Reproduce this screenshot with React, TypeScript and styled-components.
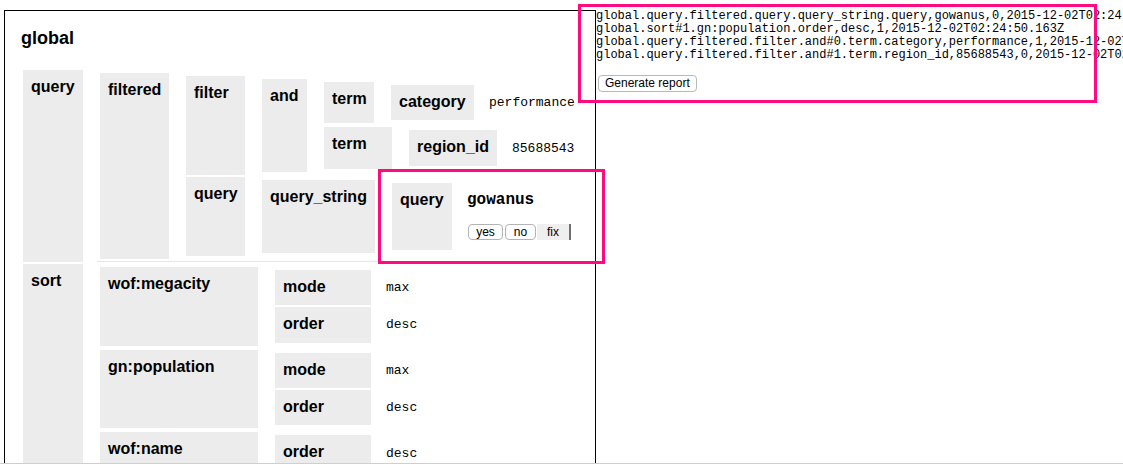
import React from "react";
import styled, { createGlobalStyle } from "styled-components";

const PINK = "#ff0a80";
const KEY_BG = "#ececec";
const MONO = `"Liberation Mono", "Courier New", monospace`;
const SANS = `"Liberation Sans", Arial, sans-serif`;

const GlobalStyle = createGlobalStyle`
  html, body { margin: 0; padding: 0; overflow: hidden; background: #fff; }
  body { font-family: ${SANS}; color: #000; }
`;

const Page = styled.div`
  position: relative;
  height: 464px;
  box-sizing: border-box;
  padding: 10px 0 0 4px;
`;

const Frame = styled.div`
  width: 592px;
  min-height: 700px;
  box-sizing: border-box;
  border: 1px solid #000;
  padding-right: 1px;
`;

const Title = styled.div`
  margin: 17px 0 0 16px;
  font-size: 18px;
  font-weight: bold;
  line-height: 21px;
`;

const Tree = styled.div`
  margin: 18px 0 0 15px;
  padding: 3px 0 3px 3px;
  display: flex;
  flex-direction: column;
  gap: 2px;
`;

const Row = styled.div`
  display: flex;
  align-items: stretch;
  gap: 14px;
`;

const Key = styled.div<{ $w: number }>`
  flex: none;
  width: ${(p) => p.$w}px;
  box-sizing: border-box;
  background: ${KEY_BG};
  padding: 8px 8px 9px;
  font-size: 16px;
  font-weight: bold;
  line-height: 18.4px;
  white-space: nowrap;
`;

const Nest = styled.div<{ $gap?: number; $rule?: boolean; $mark?: boolean }>`
  flex: 1;
  min-width: 0;
  display: flex;
  flex-direction: column;
  gap: ${(p) => p.$gap ?? 2}px;
  padding: 3px 0 3px 3px;
  ${(p) => (p.$rule ? "box-shadow: inset 0 -1px 0 #e6e6e6;" : "")}
  ${(p) => (p.$mark ? `outline: 3px solid ${PINK}; outline-offset: 8px;` : "")}
`;

const Scalar = styled.div`
  flex: 1;
  display: flex;
  align-items: center;
  padding-left: 1px;
  font-family: ${MONO};
  font-size: 13px;
  white-space: nowrap;
`;

const Answer = styled.div`
  flex: 1;
  padding: 8px 0 10px 1px;
`;

const Word = styled.div`
  font-family: ${MONO};
  font-weight: bold;
  font-size: 16px;
  line-height: 19px;
`;

const Choices = styled.div`
  display: flex;
  gap: 2px;
  margin: 14px 0 0 1px;
  height: 16px;
`;

const Choice = styled.button<{ $w: number; $active?: boolean }>`
  width: ${(p) => p.$w}px;
  height: 16px;
  padding: 0;
  box-sizing: border-box;
  font-family: ${SANS};
  font-size: 12px;
  line-height: 14px;
  color: #000;
  background: ${(p) => (p.$active ? "#efefef" : "#fff")};
  border: ${(p) => (p.$active ? "none" : "1px solid #b4b4b4")};
  border-right: ${(p) => (p.$active ? "2px solid #707070" : "1px solid #b4b4b4")};
  border-radius: ${(p) => (p.$active ? "0" : "4px")};
  margin-left: ${(p) => (p.$active ? "-1px" : "0")};
`;

const LogPanel = styled.div`
  position: absolute;
  left: 581px;
  top: 7px;
  width: 513px;
  height: 93px;
  box-sizing: border-box;
  padding: 3px 0 0 15px;
  outline: 3px solid ${PINK};
`;

const LogText = styled.pre`
  margin: 0;
  font-family: ${MONO};
  font-size: 12px;
  line-height: 13px;
  white-space: pre;
  color: #000;
`;

const ReportButton = styled.button`
  display: block;
  margin: 13px 0 0 2px;
  height: 17px;
  padding: 0 6px;
  box-sizing: border-box;
  font-family: ${SANS};
  font-size: 12px;
  line-height: 15px;
  color: #000;
  background: #fff;
  border: 1px solid #b9b9b9;
  border-radius: 4px;
`;

const ScrollEdge = styled.div`
  position: fixed;
  left: 0;
  right: 0;
  bottom: 0;
  height: 1px;
  background: #cfcfcf;
`;

const LOG = [
  "global.query.filtered.query.query_string.query,gowanus,0,2015-12-02T02:24:50.163Z",
  "global.sort#1.gn:population.order,desc,1,2015-12-02T02:24:50.163Z",
  "global.query.filtered.filter.and#0.term.category,performance,1,2015-12-02T02:24:50.163Z",
  "global.query.filtered.filter.and#1.term.region_id,85688543,0,2015-12-02T02:24:50.163Z",
];

type SortItem = { name: string; fields: [string, string][] };
const SORTS: SortItem[] = [
  { name: "wof:megacity", fields: [["mode", "max"], ["order", "desc"]] },
  { name: "gn:population", fields: [["mode", "max"], ["order", "desc"]] },
  { name: "wof:name", fields: [["order", "desc"], ["mode", "max"]] },
];

export default function App() {
  return (
    <>
      <GlobalStyle />
      <Page>
        <Frame>
          <Title>global</Title>
          <Tree>
            <Row>
              <Key $w={60}>query</Key>
              <Nest $rule>
                <Row>
                  <Key $w={69}>filtered</Key>
                  <Nest>
                    <Row>
                      <Key $w={59}>filter</Key>
                      <Nest>
                        <Row>
                          <Key $w={45}>and</Key>
                          <Nest $gap={4}>
                            <Row>
                              <Key $w={50}>term</Key>
                              <Nest>
                                <Row>
                                  <Key $w={83}>category</Key>
                                  <Scalar>performance</Scalar>
                                </Row>
                              </Nest>
                            </Row>
                            <Row>
                              <Key $w={68}>term</Key>
                              <Nest>
                                <Row>
                                  <Key $w={88}>region_id</Key>
                                  <Scalar>85688543</Scalar>
                                </Row>
                              </Nest>
                            </Row>
                          </Nest>
                        </Row>
                      </Nest>
                    </Row>
                    <Row>
                      <Key $w={59}>query</Key>
                      <Nest>
                        <Row>
                          <Key $w={113}>query_string</Key>
                          <Nest $mark>
                            <Row>
                              <Key $w={60}>query</Key>
                              <Answer>
                                <Word>gowanus</Word>
                                <Choices>
                                  <Choice $w={35}>yes</Choice>
                                  <Choice $w={31}>no</Choice>
                                  <Choice $w={34} $active>
                                    fix
                                  </Choice>
                                </Choices>
                              </Answer>
                            </Row>
                          </Nest>
                        </Row>
                      </Nest>
                    </Row>
                  </Nest>
                </Row>
              </Nest>
            </Row>
            <Row>
              <Key $w={60}>sort</Key>
              <Nest $gap={4}>
                {SORTS.map((s) => (
                  <Row key={s.name}>
                    <Key $w={158}>{s.name}</Key>
                    <Nest>
                      {s.fields.map(([k, v]) => (
                        <Row key={k}>
                          <Key $w={96}>{k}</Key>
                          <Scalar>{v}</Scalar>
                        </Row>
                      ))}
                    </Nest>
                  </Row>
                ))}
              </Nest>
            </Row>
          </Tree>
        </Frame>
        <LogPanel>
          <LogText>{LOG.join("\n")}</LogText>
          <ReportButton>Generate report</ReportButton>
        </LogPanel>
        <ScrollEdge />
      </Page>
    </>
  );
}
